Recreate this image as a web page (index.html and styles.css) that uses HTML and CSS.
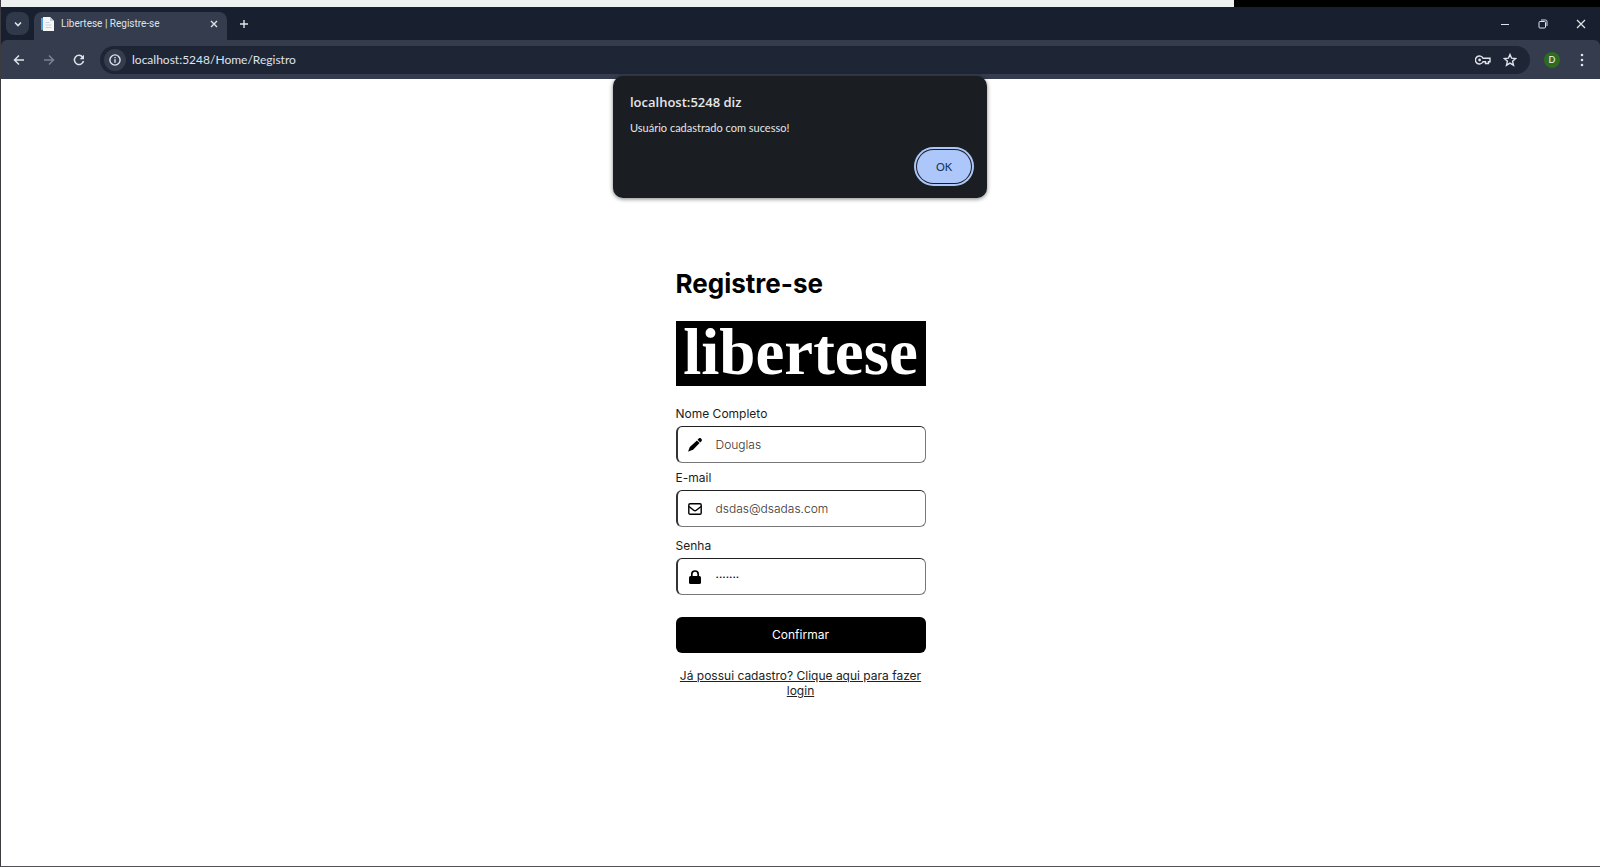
FILE: index.html
```html
<!DOCTYPE html>
<html lang="pt-BR">
<head>
<meta charset="utf-8">
<title>Libertese | Registre-se</title>
<link rel="stylesheet" href="styles.css">
</head>
<body>
<div class="backdrop"><div class="backdrop-light"></div></div>
<header class="chrome">
  <div class="tabs">
    <button class="tab-search" aria-label="Pesquisar guias"><svg width="10" height="10" viewBox="0 0 10 10"><path d="M2 3.500l3 3 3-3" fill="none" stroke="currentColor" stroke-width="1.600"/></svg></button>
    <div class="tab">
      <svg width="13" height="14" viewBox="0 0 13 14"><path d="M0 1h3v12H0z" fill="#4f9fe0"/><path d="M2 0h7l4 4v10H2z" fill="#f4f6f8"/><path d="M9 0v4h4z" fill="#c2ccd6"/><path d="M4.500 5.500h4M4.500 8h6M4.500 10.500h6" stroke="#c8d2dc"/></svg>
      <span class="tab-title">Libertese | Registre-se</span>
      <button class="bare" aria-label="Fechar guia"><svg width="8" height="8" viewBox="0 0 8 8"><path d="M1 1l6 6M7 1L1 7" stroke="currentColor" stroke-width="1.400"/></svg></button>
    </div>
    <button class="bare new-tab" aria-label="Nova guia"><svg width="10" height="10" viewBox="0 0 10 10"><path d="M5 1v8M1 5h8" stroke="currentColor" stroke-width="1.400"/></svg></button>
    <div class="window-buttons">
      <button class="bare" aria-label="Minimizar"><svg width="10" height="10" viewBox="0 0 10 10"><path d="M1 5.500h8" stroke="currentColor"/></svg></button>
      <button class="bare" aria-label="Restaurar"><svg width="10" height="10" viewBox="0 0 10 10"><rect x="1" y="2.500" width="6.500" height="6.500" rx="1" fill="none" stroke="currentColor"/><path d="M3 1h4.500Q9 1 9 2.500V7" fill="none" stroke="currentColor"/></svg></button>
      <button class="bare" aria-label="Fechar"><svg width="10" height="10" viewBox="0 0 10 10"><path d="M1 1l8 8M9 1L1 9" stroke="currentColor" stroke-width="1.200"/></svg></button>
    </div>
  </div>
  <nav class="toolbar">
    <div class="nav-buttons">
      <button class="bare" aria-label="Voltar"><svg width="12" height="12" viewBox="0 0 12 12"><path d="M11 6H2M6 1.500L1.500 6 6 10.500" fill="none" stroke="currentColor" stroke-width="1.500"/></svg></button>
      <button class="bare muted" aria-label="Avançar"><svg width="12" height="12" viewBox="0 0 12 12"><path d="M1 6h9M6 1.500L10.500 6 6 10.500" fill="none" stroke="currentColor" stroke-width="1.500"/></svg></button>
      <button class="bare" aria-label="Recarregar"><svg width="12" height="12" viewBox="0 0 12 12"><path d="M9.700 3.200A4.600 4.600 0 1 0 10.500 7" fill="none" stroke="currentColor" stroke-width="1.500"/><path d="M11 .8v4.400H6.600z" fill="currentColor"/></svg></button>
    </div>
    <div class="omnibox">
      <button class="site-info" aria-label="Informações do site"><svg width="12" height="12" viewBox="0 0 12 12"><circle cx="6" cy="6" r="5.100" fill="none" stroke="currentColor" stroke-width="1.400"/><path d="M6 5.200v3.600M6 3v1.300" stroke="currentColor" stroke-width="1.400"/></svg></button>
      <input class="url" type="text" aria-label="Endereço" value="localhost:5248/Home/Registro">
      <button class="bare" aria-label="Senhas"><svg width="16" height="10" viewBox="0 0 16 10"><path d="M8 3.200A4 4 0 1 0 8 6.800h2.500v1.700h3V6.800H15V3.200z" fill="none" stroke="currentColor" stroke-width="1.400"/><circle cx="4.600" cy="5" r="1.400" fill="currentColor"/></svg></button>
      <button class="bare" aria-label="Favoritos"><svg width="14" height="14" viewBox="0 0 14 14"><path d="M7 1.500l1.600 3.700 4 .4-3 2.700.9 3.900L7 10.100l-3.500 2.100.9-3.900-3-2.700 4-.4z" fill="none" stroke="currentColor" stroke-width="1.400"/></svg></button>
    </div>
    <button class="avatar" aria-label="Perfil">D</button>
    <button class="bare" aria-label="Menu"><svg width="4" height="14" viewBox="0 0 4 14"><g fill="currentColor"><circle cx="2" cy="2" r="1.300"/><circle cx="2" cy="7" r="1.300"/><circle cx="2" cy="12" r="1.300"/></g></svg></button>
  </nav>
</header>
<main class="page">
  <form class="register">
    <h1>Registre-se</h1>
    <div class="logo">libertese</div>
    <div class="field">
      <label for="name">Nome Completo</label>
      <div class="control">
        <svg width="14" height="14" viewBox="0 0 512 512"><path d="M395 22c22-24 58-24 80 0l16 16c24 22 24 58 0 80l-46 46-96-96zM328 90l96 96-240 240c-8 8-18 14-29 17L20 495c-10 2-16-4-13-14l52-135c3-11 9-21 17-29z"/></svg>
        <input id="name" type="text" value="Douglas">
      </div>
    </div>
    <div class="field field-spaced">
      <label for="email">E-mail</label>
      <div class="control">
        <svg width="14" height="14" viewBox="0 0 14 14" fill="none" stroke="#000" stroke-width="1.400"><rect x=".8" y="1.800" width="12.400" height="10.400" rx="1.200"/><path d="M1 4.500l4.700 3.700q1.300 1 2.600 0L13 4.500"/></svg>
        <input id="email" type="email" value="dsdas@dsadas.com">
      </div>
    </div>
    <div class="field">
      <label for="password">Senha</label>
      <div class="control">
        <svg width="14" height="14" viewBox="0 0 14 14"><rect x="1" y="6" width="12" height="8" rx="1.600"/><path d="M3.800 7V4.200a3.200 3.200 0 0 1 6.400 0V7" fill="none" stroke="#000" stroke-width="1.700"/></svg>
        <input id="password" class="secret" type="password" value="1234567">
      </div>
    </div>
    <button class="submit" type="submit">Confirmar</button>
    <a class="login" href="#">Já possui cadastro? Clique aqui para fazer login</a>
  </form>
</main>
<div class="alert" role="alertdialog" aria-labelledby="alert-title" aria-describedby="alert-text">
  <h2 id="alert-title">localhost:5248 diz</h2>
  <p id="alert-text">Usuário cadastrado com sucesso!</p>
  <button class="alert-ok">OK</button>
</div>
</body>
</html>
```
FILE: styles.css
```css
* { box-sizing: border-box; }
body {
  margin: 0;
  min-height: 100vh;
  display: flex;
  flex-direction: column;
  border-left: 1px solid #3c3c40;
  border-bottom: 1px solid #555057;
  background: #fff;
  color: #1c1c1c;
  font: 12px/16px Inter, "Liberation Sans", sans-serif;
}
button, input { font: inherit; color: inherit; }
button { padding: 0; border: 0; cursor: pointer; }
svg { display: block; flex: none; }
.bare { display: flex; align-items: center; justify-content: center; background: none; }

.backdrop { height: 7px; background: #000; }
.backdrop-light { width: 77.1%; height: 7px; background: #eff1f1; }

.chrome { background: #18202f; color: #dfe3ea; font-family: Lato, "Noto Sans", sans-serif; }
.tabs, .toolbar { display: flex; align-items: center; }
.tabs { height: 33px; padding-left: 5px; }
.tab-search {
  width: 23px; height: 23px; margin-right: 5px;
  display: flex; align-items: center; justify-content: center;
  border-radius: 8px; background: #30394a;
}
.tab {
  align-self: flex-end;
  width: 193px; height: 28px; padding: 0 9px 4px 7px;
  display: flex; align-items: center; gap: 7px;
  border-radius: 8px 8px 0 0; background: #343c4d;
}
.tab-title { flex: 1; font-family: Roboto, "Noto Sans", sans-serif; font-size: 10px; white-space: nowrap; }
.new-tab { width: 34px; height: 24px; }
.window-buttons { margin-left: auto; display: flex; }
.window-buttons .bare { width: 38px; height: 30px; }

.toolbar { height: 39px; padding: 0 16px 0 12px; background: #343c4d; border-radius: 6px 6px 0 0; }
.nav-buttons { display: flex; gap: 18px; }
.muted { color: #7b8392; }
.omnibox {
  flex: 1; height: 28px; margin: 0 14px 0 15px; padding: 0 13px 0 4px;
  display: flex; align-items: center; gap: 12px;
  border-radius: 14px; background: #1e2636;
}
.site-info { width: 22px; height: 22px; display: flex; align-items: center; justify-content: center; border-radius: 50%; background: #343c4d; }
.url { flex: 1; min-width: 0; padding: 0; margin-left: -6px; border: 0; outline: 0; background: none; font-size: 12px; }
.avatar { width: 16px; height: 16px; margin-right: 20px; border-radius: 50%; background: #2f6b1e; font-size: 9px; font-weight: 600; line-height: 16px; }

.page { flex: 1; padding: 189px 16px 0; }
.register { max-width: 250px; margin: 0 auto; display: flex; flex-direction: column; }
.register h1 { margin: 0 0 21px; color: #000; font-size: 26px; line-height: 32px; font-weight: 700; }
.logo {
  height: 65px; margin-bottom: 20px;
  background: #000; color: #fff; text-align: center;
  font: 700 65px/62px "Liberation Serif", serif;
}
.field { display: flex; flex-direction: column; gap: 4px; margin-bottom: 7px; }
.field-spaced { margin-bottom: 11px; }
.control {
  height: 37px; padding: 0 10px; display: flex; align-items: center; gap: 14px;
  border: 1px solid #777; border-top-color: #222; border-left: 2px solid #333; border-radius: 6px;
}
.control input { flex: 1; min-width: 0; padding: 0; border: 0; outline: 0; background: none; color: #333; font-weight: 300; }
.control .secret { font-size: 6px; color: #000; }
.submit { height: 36px; margin: 15px 0; border-radius: 6px; background: #000; color: #fff; }
.login { color: #222; line-height: 15px; text-align: center; }

.alert {
  position: absolute; top: 76px; left: 50%; transform: translateX(-50%);
  width: 374px; padding: 16px 16px 15px 17px;
  display: flex; flex-direction: column;
  border-radius: 10px; background: #1a1d21; color: #e6e6ea;
  box-shadow: 0 1px 4px rgba(0, 0, 0, .5);
  font-family: Lato, "Noto Sans", sans-serif;
}
.alert h2 { margin: 0 0 8px; font: 600 13px/20px "Open Sans", "Noto Sans", sans-serif; }
.alert p { margin: 0 0 14px; font-size: 11px; }
.alert-ok {
  align-self: flex-end; width: 54px; height: 33px;
  border-radius: 17px; background: #adc7fa; color: #1b3763; font-size: 11px; font-weight: 500;
  box-shadow: 0 0 0 1px #1a1d21, 0 0 0 3px #adc7fa;
}
```
